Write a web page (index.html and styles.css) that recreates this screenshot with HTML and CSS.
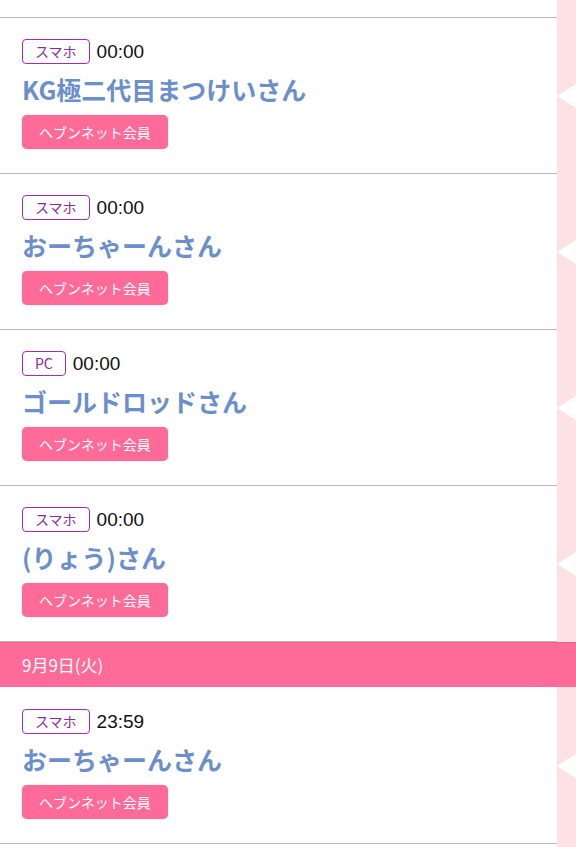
FILE: index.html
```html
<!DOCTYPE html>
<html lang="ja">
<head>
<meta charset="utf-8">
<link rel="stylesheet" href="styles.css">
</head>
<body>
<div class="page">
  <div class="row top"><div class="main"></div><div class="side"></div></div>

  <div class="row">
    <div class="main item">
      <div class="meta"><span class="tag">スマホ</span><span class="time">00:00</span></div>
      <div class="name">KG極二代目まつけいさん</div>
      <span class="btn">ヘブンネット会員</span>
    </div>
    <div class="side"><span class="arrow"></span></div>
  </div>

  <div class="row">
    <div class="main item">
      <div class="meta"><span class="tag">スマホ</span><span class="time">00:00</span></div>
      <div class="name">おーちゃーんさん</div>
      <span class="btn">ヘブンネット会員</span>
    </div>
    <div class="side"><span class="arrow"></span></div>
  </div>

  <div class="row">
    <div class="main item">
      <div class="meta"><span class="tag">PC</span><span class="time">00:00</span></div>
      <div class="name">ゴールドロッドさん</div>
      <span class="btn">ヘブンネット会員</span>
    </div>
    <div class="side"><span class="arrow"></span></div>
  </div>

  <div class="row">
    <div class="main item">
      <div class="meta"><span class="tag">スマホ</span><span class="time">00:00</span></div>
      <div class="name">(りょう)さん</div>
      <span class="btn">ヘブンネット会員</span>
    </div>
    <div class="side"><span class="arrow"></span></div>
  </div>

  <div class="date">9月9日(火)</div>

  <div class="row">
    <div class="main item after-date">
      <div class="meta"><span class="tag">スマホ</span><span class="time">23:59</span></div>
      <div class="name">おーちゃーんさん</div>
      <span class="btn">ヘブンネット会員</span>
    </div>
    <div class="side"><span class="arrow"></span></div>
  </div>

  <div class="row"><div class="main"></div><div class="side"></div></div>
</div>
</body>
</html>
```

FILE: styles.css
```css
* { box-sizing: border-box; }
html, body {
  margin: 0;
  padding: 0;
  background: #fff;
  font-family: "Noto Sans CJK JP", "Noto Sans", sans-serif;
}
.page {
  width: 576px;
  height: 847px;
  overflow: hidden;
  display: flex;
  flex-direction: column;
}
.row {
  display: flex;
  flex-shrink: 0;
}
.main {
  flex: 1;
  background: #fff;
  border-bottom: 1px solid #b9b9b9;
}
.top .main { height: 18px; }
.side {
  width: 19px;
  background: #fde1e4;
  display: flex;
  align-items: center;
  justify-content: flex-end;
}
.arrow {
  width: 0;
  height: 0;
  border-top: 12px solid transparent;
  border-bottom: 12px solid transparent;
  border-right: 19px solid #fff;
}
.item {
  padding: 21px 0 24px 22px;
  display: flex;
  flex-direction: column;
  align-items: flex-start;
}
.item.after-date { padding-top: 22px; }
.meta {
  display: flex;
  align-items: center;
  height: 25px;
}
.tag {
  height: 25px;
  padding: 0 12px;
  border: 1.5px solid #a32cb4;
  border-radius: 4px;
  color: #8e2a9e;
  font-size: 14px;
  line-height: 22px;
}
.time {
  margin-left: 7px;
  font-family: "Liberation Sans", Arial, sans-serif;
  font-size: 19px;
  color: #111;
  line-height: 25px;
}
.name {
  margin-top: 9px;
  height: 32px;
  line-height: 32px;
  font-size: 25px;
  font-weight: 600;
  color: #6b8fcc;
  white-space: nowrap;
}
.btn {
  margin-top: 10px;
  height: 34px;
  padding: 0 17px;
  background: #ff6b99;
  border-radius: 5px;
  color: #fff;
  font-size: 14px;
  line-height: 34px;
  box-shadow: 0 0 1px rgba(200, 60, 110, 0.6);
}
.date {
  flex-shrink: 0;
  height: 45px;
  background: #ff6b98;
  border-top: 1px solid #e5648c;
  color: #fff;
  font-size: 17px;
  line-height: 44px;
  padding-left: 22px;
}
.row:last-child .main { height: 40px; border-bottom: none; }
```
